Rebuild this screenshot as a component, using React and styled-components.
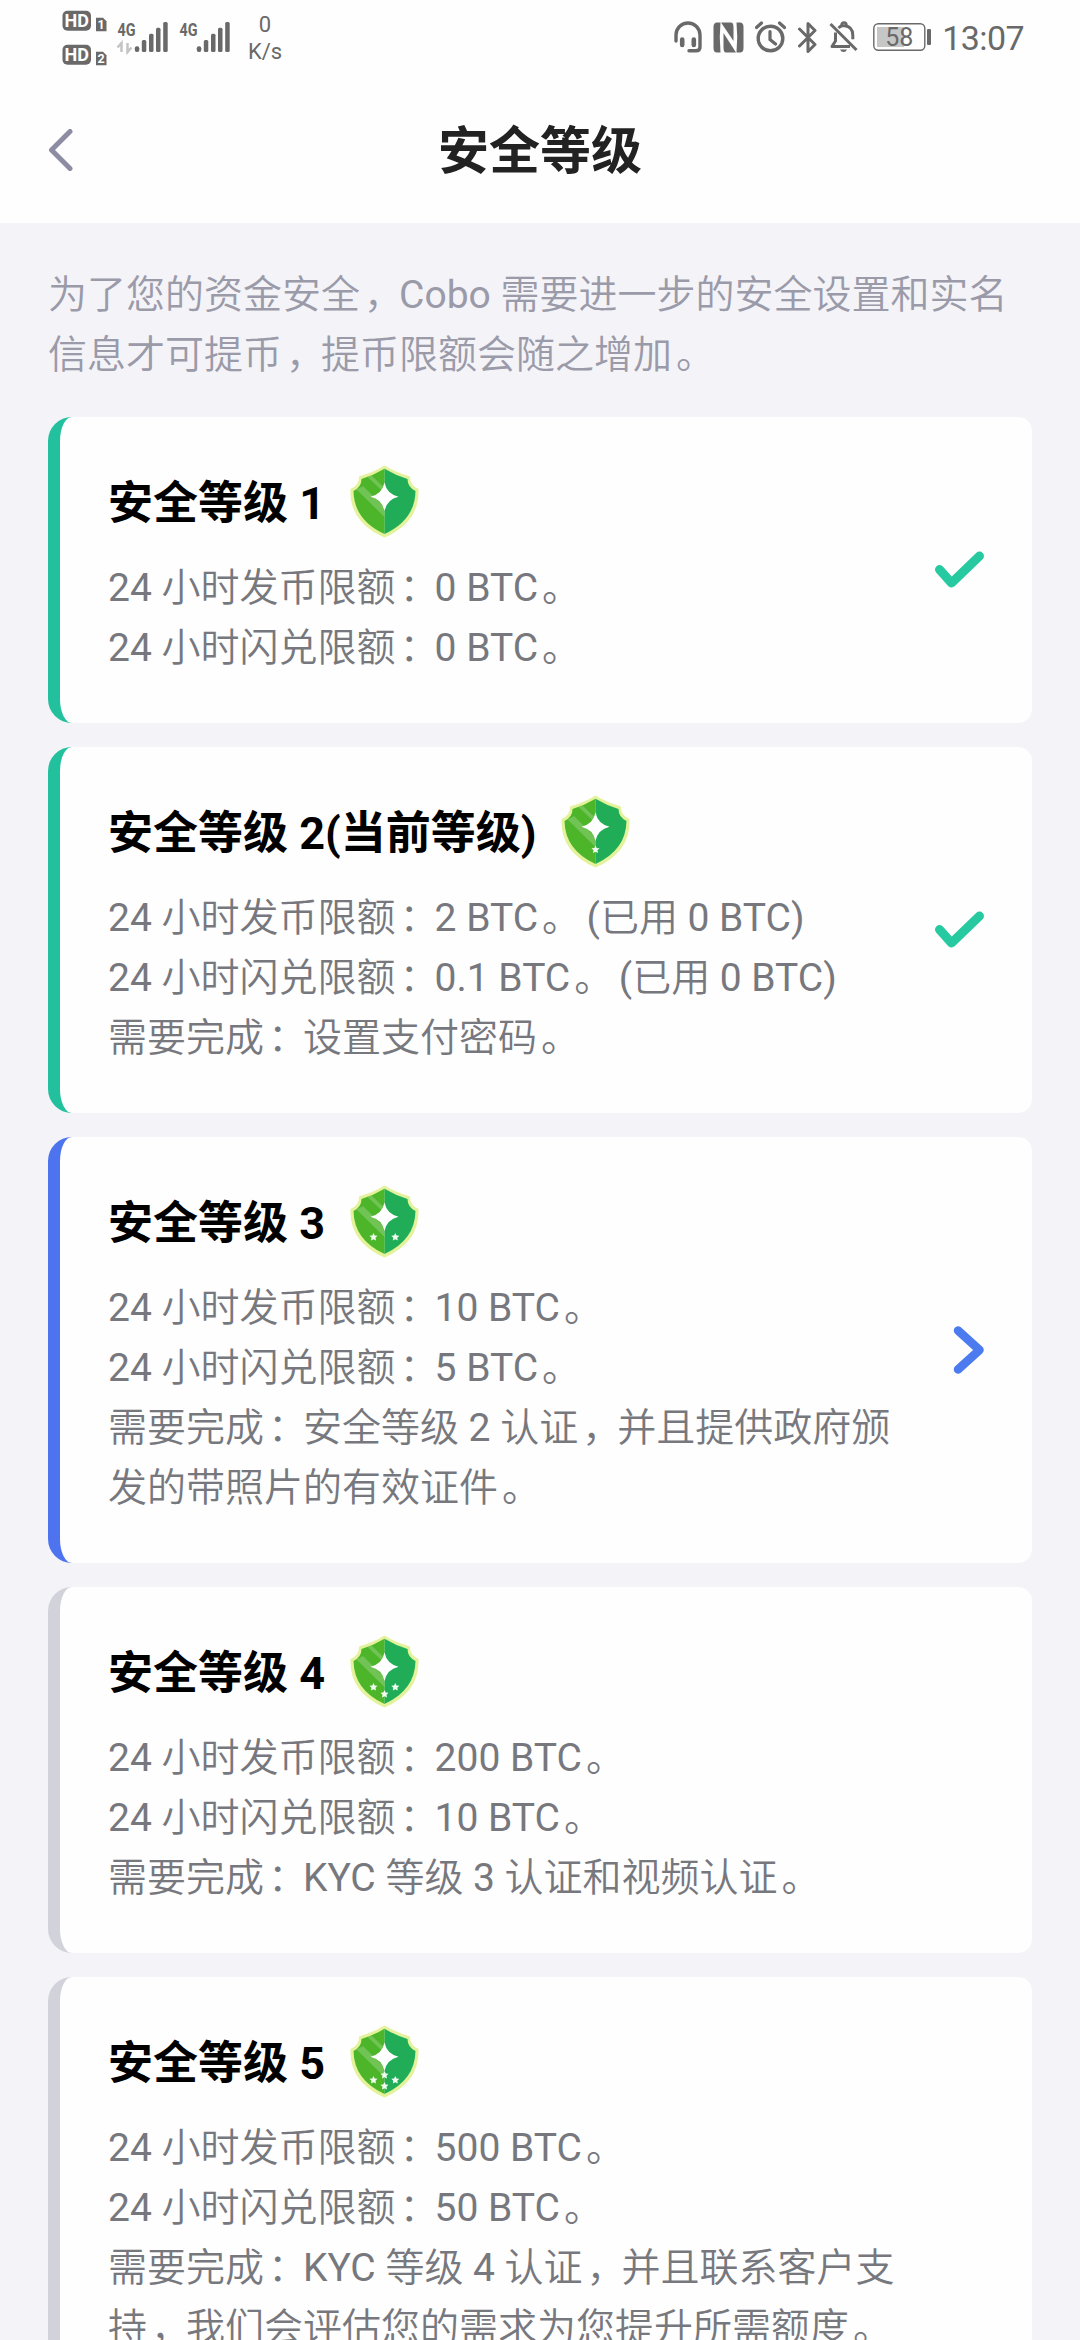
import styled, { createGlobalStyle } from "styled-components";

const statusColor = "#696969";

const levels = [
  {
    title: "安全等级 1",
    state: "done",
    lines: ["24 小时发币限额：0 BTC。", "24 小时闪兑限额：0 BTC。"],
    stars: [],
  },
  {
    title: "安全等级 2(当前等级)",
    state: "done",
    lines: [
      "24 小时发币限额：2 BTC。 (已用 0 BTC)",
      "24 小时闪兑限额：0.1 BTC。 (已用 0 BTC)",
      "需要完成：设置支付密码。",
    ],
    stars: [[34.5, 54.5]],
  },
  {
    title: "安全等级 3",
    state: "next",
    lines: [
      "24 小时发币限额：10 BTC。",
      "24 小时闪兑限额：5 BTC。",
      "需要完成：安全等级 2 认证，并且提供政府颁发的带照片的有效证件。",
    ],
    stars: [
      [23.5, 52],
      [45.3, 52],
    ],
  },
  {
    title: "安全等级 4",
    state: "locked",
    lines: [
      "24 小时发币限额：200 BTC。",
      "24 小时闪兑限额：10 BTC。",
      "需要完成：KYC 等级 3 认证和视频认证。",
    ],
    stars: [
      [23.5, 52],
      [45.3, 52],
      [34.5, 59],
    ],
  },
  {
    title: "安全等级 5",
    state: "locked",
    lines: [
      "24 小时发币限额：500 BTC。",
      "24 小时闪兑限额：50 BTC。",
      "需要完成：KYC 等级 4 认证，并且联系客户支持，我们会评估您的需求为您提升所需额度。",
    ],
    stars: [
      [23.5, 55],
      [45.3, 55],
      [34.5, 61],
      [34.5, 50],
    ],
  },
];

const edgeColors = {
  done: "#22c09c",
  next: "#4d74ee",
  locked: "#d2d3da",
};

const GlobalStyle = createGlobalStyle`
  * {
    box-sizing: border-box;
  }
  body {
    margin: 0;
    background-color: #f3f3f8;
    font-family: Roboto, "Noto Sans CJK SC", sans-serif;
  }
`;

const Screen = styled.div`
  width: 1080px;
  height: 2340px;
  overflow: hidden;
  background-color: #f3f3f8;
`;

const StatusBar = styled.div`
  height: 76px;
  padding: 0 56px 0 62px;
  display: flex;
  justify-content: space-between;
  background-color: #fefefe;
  color: ${statusColor};
  svg {
    display: block;
    flex: none;
  }
`;

const StatusGroup = styled.div`
  display: flex;
  align-items: center;
  height: 74px;
  gap: ${(props) => props.$gap || 0}px;
`;

const Speed = styled.div`
  margin-left: 16px;
  width: 36px;
  font-size: 22px;
  line-height: 27px;
  text-align: center;
  padding-top: 2px;
`;

const Power = styled.div`
  display: flex;
  align-items: center;
  gap: 10px;
  margin-left: 4px;
`;

const Clock = styled.div`
  font-size: 34px;
  line-height: 40px;
  letter-spacing: -0.6px;
  padding-top: 2px;
`;

const Header = styled.header`
  height: 147px;
  padding: 0 48px;
  display: grid;
  grid-template-columns: 100px 1fr 100px;
  align-items: center;
  background-color: #fefefe;
  h1 {
    margin: 0;
    padding-top: 5px;
    font-size: 51px;
    line-height: 60px;
    font-weight: 700;
    text-align: center;
    color: #222222;
  }
`;

const Intro = styled.p`
  margin: 0;
  padding: 42px 48px 32px;
  font-size: 39px;
  line-height: 60px;
  font-weight: 350;
  color: #9a9aa8;
`;

const List = styled.div`
  display: flex;
  flex-direction: column;
  gap: 24px;
  padding: 0 48px;
`;

const Card = styled.section`
  display: flex;
  align-items: center;
  justify-content: space-between;
  padding: 45px 48px;
  border-left: 12px solid ${(props) => edgeColors[props.$state]};
  border-radius: 24px 14px 14px 24px;
  background-color: #fefefe;
  svg {
    flex: none;
  }
`;

const CardBody = styled.div`
  width: 812px;
  flex: none;
`;

const CardTitle = styled.h2`
  display: flex;
  align-items: center;
  height: 75px;
  padding-top: 3px;
  margin: 0 0 21px;
  gap: 24.5px;
  font-size: 45px;
  font-weight: 700;
  color: #000;
  span {
    padding-bottom: 3px;
  }
`;

const Line = styled.p`
  margin: 0;
  font-size: 39px;
  line-height: 60px;
  font-weight: 350;
  color: #77787e;
`;

const Latin = styled.span`
  font-weight: 400;
`;

// full-width marks sit a little to the right inside their cell
const Mark = styled.span`
  padding-left: 4px;
  letter-spacing: -4px;
`;

const MixedText = ({ children }) =>
  children
    .split(/([\x21-\x7e][\x20-\x7e]*|[，：。])/)
    .map((part, i) => {
      if (/^[，：。]$/.test(part)) return <Mark key={i}>{part}</Mark>;
      if (/^[\x21-\x7e]/.test(part)) return <Latin key={i}>{part}</Latin>;
      return part;
    });

const HdBadge = ({ number, y }) => (
  <g transform={`translate(0 ${y})`}>
    <rect x="0.5" y="0" width="28.5" height="20" rx="5" fill={statusColor} />
    <text
      x="14.7"
      y="16.2"
      fontSize="18"
      fontWeight="700"
      textAnchor="middle"
      fill="#fff"
    >
      HD
    </text>
    <path d="M34 7h7l3.500 3.500V20.500H34z" fill={statusColor} />
    <text
      x="39.200"
      y="18.500"
      fontSize="12.500"
      fontWeight="700"
      textAnchor="middle"
      fill="#fff"
    >
      {number}
    </text>
  </g>
);

const HdIcons = () => (
  <svg width="46" height="74" viewBox="0 0 46 74">
    <HdBadge number={1} y={10.7} />
    <HdBadge number={2} y={44.7} />
  </svg>
);

const Signal = ({ arrows }) => (
  <svg width="61.500" height="74" viewBox="0 0 61.500 74">
    <text
      x="9"
      y="36"
      fontSize="19"
      fontWeight="700"
      textAnchor="middle"
      textLength="18"
      lengthAdjust="spacingAndGlyphs"
      transform="translate(9.500 0)"
      fill={statusColor}
    >
      4G
    </text>
    {arrows && (
      <path
        d="M13.500 52V43l-4 4.500M19.500 43v9l4-4.500"
        stroke="#c4c4c4"
        strokeWidth="2.500"
        fill="none"
      />
    )}
    <g fill={statusColor}>
      <rect x="26.800" y="46.300" width="4.500" height="5.700" rx="2" />
      <rect x="33.800" y="40" width="4.500" height="12" rx="1.500" />
      <rect x="41" y="33.700" width="4.500" height="18.300" rx="1.500" />
      <rect x="48" y="27.700" width="4.500" height="24.300" rx="1.500" />
      <rect x="55.200" y="22" width="4.500" height="30" rx="1.500" />
    </g>
  </svg>
);

const Headset = () => (
  <svg width="28" height="32" viewBox="0 0 28 32" fill="none">
    <path
      d="M2 20v-6a12 12 0 0 1 12-12 12 12 0 0 1 12 12v12q0 3.800-4 3.800h-7"
      stroke={statusColor}
      strokeWidth="3.400"
      strokeLinecap="round"
    />
    <path
      d="M8.200 18.500v5.500M19.800 18.500v5.500"
      stroke={statusColor}
      strokeWidth="4.600"
      strokeLinecap="round"
    />
  </svg>
);

const Nfc = () => (
  <svg width="31" height="31" viewBox="0 0 31 31">
    <path
      d="M4 0.500H7.500Q6 15 7.500 30.500H4Q0.500 30.500 0.500 26V5Q0.500 0.500 4 0.500z"
      fill={statusColor}
    />
    <path
      d="M27 0.500H23.500Q25 15 23.500 30.500H27Q30.500 30.500 30.500 26V5Q30.500 0.500 27 0.500z"
      fill={statusColor}
    />
    <path d="M8 0.500h10q2.500 0 2.500 5v13.500z" fill={statusColor} />
    <path d="M23 30.500H13q-2.500 0-2.500-5V11z" fill={statusColor} />
  </svg>
);

const Alarm = () => (
  <svg width="31" height="32" viewBox="0 0 31 32" fill="none">
    <circle cx="15.500" cy="17.500" r="12.300" stroke={statusColor} strokeWidth="3.400" />
    <path
      d="M15 10.500v8l5.500 4.500M1.500 6.500l5-4.500M29.500 6.500l-5-4.500"
      stroke={statusColor}
      strokeWidth="3.200"
      strokeLinecap="round"
    />
  </svg>
);

const Bluetooth = () => (
  <svg width="20" height="33" viewBox="0 0 20 33" fill="none">
    <path
      d="M1.500 8l15.500 15.500-7 7V2.500l7 7L1.500 25"
      stroke={statusColor}
      strokeWidth="3"
      strokeLinejoin="round"
      strokeLinecap="round"
    />
  </svg>
);

const BellOff = () => (
  <svg width="29" height="32" viewBox="0 0 29 32" fill="none">
    <path
      d="M6.500 11.500v8.500L3 25.500h18M9.500 7q2-2 4-2.200h2q8.300.8 8.300 9.500v4"
      stroke={statusColor}
      strokeWidth="3"
      strokeLinejoin="round"
    />
    <path d="M12.500 4.500q0-3 2.500-3t2.500 3" stroke={statusColor} strokeWidth="2.600" />
    <path d="M11 28.500h7q-1 2.500-3.500 2.500t-3.500-2.500z" fill={statusColor} />
    <path d="M1.500 3l26 26" stroke={statusColor} strokeWidth="3" />
  </svg>
);

const Battery = () => (
  <svg width="59" height="28" viewBox="0 0 59 28">
    <rect
      x="0.800"
      y="0.800"
      width="51"
      height="26.400"
      rx="4.500"
      fill="none"
      stroke={statusColor}
      strokeWidth="1.400"
    />
    <rect x="4" y="4" width="27" height="20" fill="#c6c6c6" />
    <rect x="54" y="6" width="4" height="16" rx="1" fill={statusColor} />
    <text x="26.300" y="22.700" fontSize="25" textAnchor="middle" fill={statusColor}>
      58
    </text>
  </svg>
);

const BackIcon = () => (
  <svg width="25" height="42" viewBox="0 0 25 42" fill="none">
    <path
      d="M22 2.500L3.500 21 22 39.500"
      stroke="#8c8ca3"
      strokeWidth="5"
      strokeLinecap="round"
      strokeLinejoin="round"
    />
  </svg>
);

const CheckIcon = () => (
  <svg width="50" height="38" viewBox="0 0 50 38" fill="none">
    <path
      d="M5.500 18.500L17.500 32 45.500 5"
      stroke="#27c9a0"
      strokeWidth="9"
      strokeLinecap="round"
      strokeLinejoin="round"
    />
  </svg>
);

const NextIcon = () => (
  <svg width="32" height="48" viewBox="0 0 32 48" fill="none">
    <path
      d="M6 4.500L27.500 24 6 43.500"
      stroke="#4b7bee"
      strokeWidth="8.500"
      strokeLinecap="round"
      strokeLinejoin="round"
    />
  </svg>
);

const smallStar =
  "M0-4L1.200-1.500 4-1.200 2 .7 2.500 3.500 0 2.200-2.500 3.500-2 .7-4-1.200-1.200-1.500z";

const Shield = ({ stars }) => (
  <svg width="69" height="73" viewBox="0 0 69 73">
    <path
      d="M34.500 0.500Q46 7.500 60 11.500Q59.500 20 68.500 24Q70 57 34.500 72.500Q-1 57 0.500 24Q9.500 20 9 11.500Q23 7.500 34.500 0.500z"
      fill="#e3f29b"
    />
    <path
      d="M34.500 3.700Q23 10.500 11.500 14Q11.500 22 3.500 26Q4 55 34.500 69z"
      fill="#4db52a"
    />
    <path
      d="M34.500 3.700Q46 10.500 57.500 14Q57.500 22 65.500 26Q65 55 34.500 69z"
      fill="#21ad58"
    />
    <path d="M17.500 12L21.500 10.500 34.500 23V28z" fill="#fff" opacity="0.2" />
    <path d="M6.500 24.500L13 21 34.500 42.500V52z" fill="#fff" opacity="0.2" />
    <path
      d="M34.500 17.500Q36.800 29 48.500 31.700Q36.800 34.400 34.500 46Q32.200 34.400 20.500 31.700Q32.200 29 34.500 17.500z"
      fill="#fff"
    />
    {stars.map(([x, y]) => (
      <path key={`${x}-${y}`} d={smallStar} transform={`translate(${x} ${y})`} fill="#f2fbf0" />
    ))}
  </svg>
);

const LevelCard = ({ level }) => (
  <Card $state={level.state}>
    <CardBody>
      <CardTitle>
        <span>{level.title}</span>
        <Shield stars={level.stars} />
      </CardTitle>
      {level.lines.map((line) => (
        <Line key={line}>
          <MixedText>{line}</MixedText>
        </Line>
      ))}
    </CardBody>
    {level.state === "done" && <CheckIcon />}
    {level.state === "next" && <NextIcon />}
  </Card>
);

const App = () => {
  return (
    <Screen>
      <GlobalStyle />
      <StatusBar>
        <StatusGroup>
          <HdIcons />
          <Signal arrows />
          <Signal />
          <Speed>
            0<br />
            K/s
          </Speed>
        </StatusGroup>
        <StatusGroup $gap={11.3}>
          <Headset />
          <Nfc />
          <Alarm />
          <Bluetooth />
          <BellOff />
          <Power>
            <Battery />
            <Clock>13:07</Clock>
          </Power>
        </StatusGroup>
      </StatusBar>
      <Header>
        <BackIcon />
        <h1>安全等级</h1>
      </Header>
      <Intro>
        <MixedText>
          为了您的资金安全，Cobo 需要进一步的安全设置和实名信息才可提币，提币限额会随之增加。
        </MixedText>
      </Intro>
      <List>
        {levels.map((level) => (
          <LevelCard key={level.title} level={level} />
        ))}
      </List>
    </Screen>
  );
};

export default App;
